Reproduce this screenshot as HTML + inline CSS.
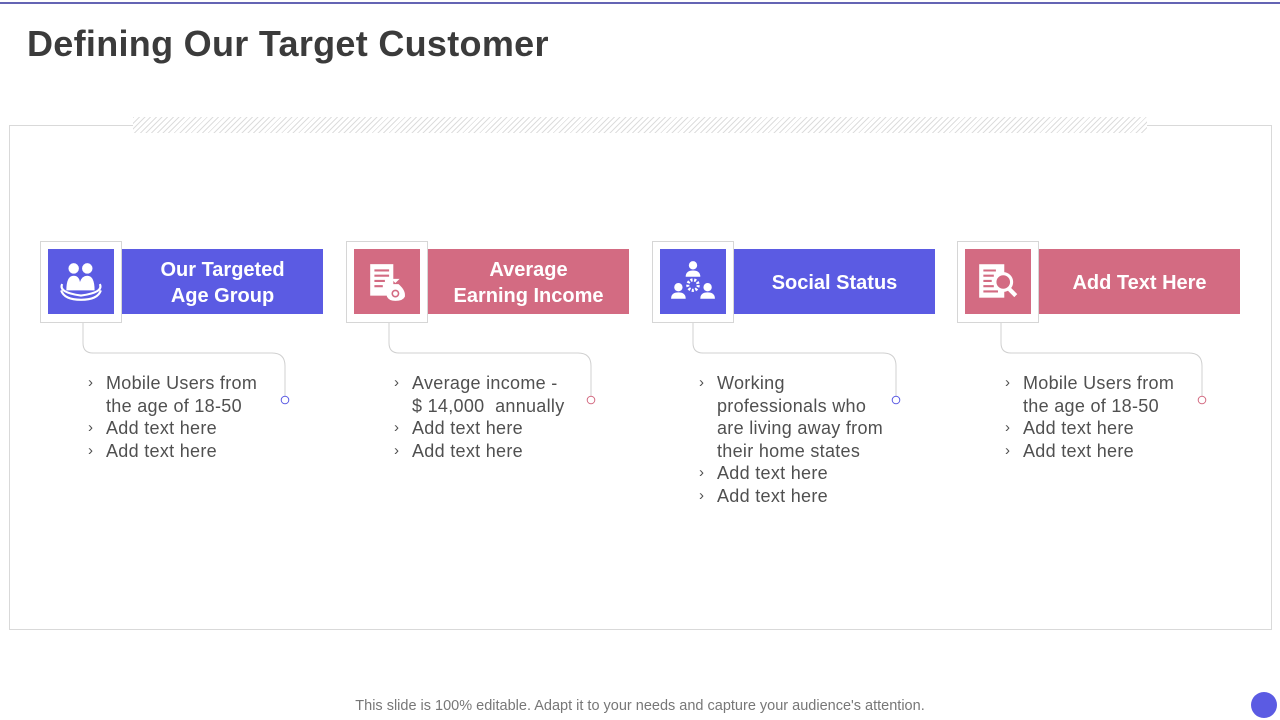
<!DOCTYPE html>
<html><head><meta charset="utf-8"><style>
*{margin:0;padding:0;box-sizing:border-box}
body{width:1280px;height:720px;position:relative;background:#fff;font-family:"Liberation Sans",sans-serif;overflow:hidden}
.a{position:absolute}
.title{left:27px;top:23px;font-size:36px;font-weight:bold;color:#3b3b3b;letter-spacing:0.3px}
.hatch{left:133px;top:117px;width:1014px;height:16px;background:repeating-linear-gradient(135deg,#ddd 0 1px,#fff 1px 4px)}
.frame{left:9px;top:125px;width:1263px;height:505px;border:1px solid #d9d9d9}
.ob{width:82px;height:82px;border:1px solid #d6d6d6;background:#fff;top:241px}
.ic{width:66px;height:65px;top:249px;display:flex;align-items:center;justify-content:center}
.lb{width:201px;height:65px;top:249px;color:#fff;font-weight:bold;font-size:20px;line-height:26px;padding-top:2px;display:flex;align-items:center;justify-content:center;text-align:center}
.b{background:#5b5be3}.p{background:#d36b82}
.txt{top:372px;font-size:18px;line-height:22.5px;color:#505050;letter-spacing:0.3px}
.txt div{position:relative;padding-left:18px}
.txt div span{position:absolute;left:0;top:0;font-size:15px}
.foot{left:0;width:1280px;top:698px;text-align:center;font-size:14.5px;color:#777}
</style></head><body>
<div class="a" style="left:0;top:2px;width:1280px;height:2px;background:#6464b4"></div>
<div class="a title">Defining Our Target Customer</div>
<div class="a frame"></div>
<div class="a hatch"></div>

<svg class="a" style="left:0;top:0" width="1280" height="720">
<g fill="none" stroke="#d0d0d0" stroke-width="1">
<path d="M83 323 V343 Q83 353 93 353 H272 Q285 353 285 366 V396"/>
<path d="M389 323 V343 Q389 353 399 353 H578 Q591 353 591 366 V396"/>
<path d="M693 323 V343 Q693 353 703 353 H883 Q896 353 896 366 V396"/>
<path d="M1001 323 V343 Q1001 353 1011 353 H1189 Q1202 353 1202 366 V396"/>
</g>
<circle cx="285" cy="400" r="3.8" fill="#fff" stroke="#5b5be3"/>
<circle cx="591" cy="400" r="3.8" fill="#fff" stroke="#d36b82"/>
<circle cx="896" cy="400" r="3.8" fill="#fff" stroke="#5b5be3"/>
<circle cx="1202" cy="400" r="3.8" fill="#fff" stroke="#d36b82"/>
<circle cx="1264" cy="705" r="13" fill="#5b5be3"/>
</svg>

<div class="a ob" style="left:40px"></div>
<div class="a ic b" style="left:48px"><svg width="46" height="42" viewBox="0 0 44 40" fill="#fff"><circle cx="15" cy="7" r="5"/><circle cx="28" cy="7" r="5"/><path d="M8 28 Q8 14 15 14 Q20 14 21 20 Q23 14 28 14 Q35 14 35 28 Z"/><path d="M4 22 Q0 30 22 33 Q44 30 40 22" fill="none" stroke="#fff" stroke-width="2"/><path d="M3 28 Q6 37 22 37 Q38 37 41 28" fill="none" stroke="#fff" stroke-width="2"/></svg></div>
<div class="a lb b" style="left:122px">Our Targeted<br>Age Group</div>

<div class="a ob" style="left:346px"></div>
<div class="a ic p" style="left:354px"><svg width="42" height="42" viewBox="0 0 40 40" fill="#fff"><rect x="4" y="3" width="22" height="30"/><g stroke="#d36b82" stroke-width="2"><path d="M8 9h14M8 14h14M8 19h10M8 24h8"/></g><path d="M25 22 Q18 28 20 34 Q22 38 28 38 Q35 38 37 34 Q38 28 31 22 Z"/><circle cx="28" cy="31" r="3" fill="none" stroke="#d36b82" stroke-width="1.5"/><path d="M24 17 L28 21 L32 17"/></svg></div>
<div class="a lb p" style="left:428px">Average<br>Earning Income</div>

<div class="a ob" style="left:652px"></div>
<div class="a ic b" style="left:660px"><svg width="48" height="46" viewBox="0 0 46 44" fill="#fff"><circle cx="23" cy="6" r="4"/><path d="M16 17 Q16 11 23 11 Q30 11 30 17Z"/><circle cx="23" cy="25" r="5" fill="none" stroke="#fff" stroke-width="3" stroke-dasharray="2 1.5"/><circle cx="9" cy="27" r="4"/><path d="M2 38 Q2 32 9 32 Q16 32 16 38Z"/><circle cx="37" cy="27" r="4"/><path d="M30 38 Q30 32 37 32 Q44 32 44 38Z"/></svg></div>
<div class="a lb b" style="left:734px">Social Status</div>

<div class="a ob" style="left:957px"></div>
<div class="a ic p" style="left:965px"><svg width="46" height="42" viewBox="0 0 44 40" fill="#fff"><rect x="4" y="3" width="24" height="32"/><g stroke="#d36b82" stroke-width="2"><path d="M8 9h12M8 14h10M8 19h8M8 24h10M8 29h14"/></g><circle cx="27" cy="20" r="8" fill="#d36b82" stroke="#fff" stroke-width="3"/><path d="M32 26 L39 33" stroke="#fff" stroke-width="4"/></svg></div>
<div class="a lb p" style="left:1039px">Add Text Here</div>

<div class="a txt" style="left:88px"><div><span>›</span>Mobile Users from<br>the age of 18-50</div><div><span>›</span>Add text here</div><div><span>›</span>Add text here</div></div>
<div class="a txt" style="left:394px"><div><span>›</span>Average income -<br>$ 14,000 &nbsp;annually</div><div><span>›</span>Add text here</div><div><span>›</span>Add text here</div></div>
<div class="a txt" style="left:699px"><div><span>›</span>Working<br>professionals who<br>are living away from<br>their home states</div><div><span>›</span>Add text here</div><div><span>›</span>Add text here</div></div>
<div class="a txt" style="left:1005px"><div><span>›</span>Mobile Users from<br>the age of 18-50</div><div><span>›</span>Add text here</div><div><span>›</span>Add text here</div></div>

<div class="a foot">This slide is 100% editable. Adapt it to your needs and capture your audience's attention.</div>
</body></html>
